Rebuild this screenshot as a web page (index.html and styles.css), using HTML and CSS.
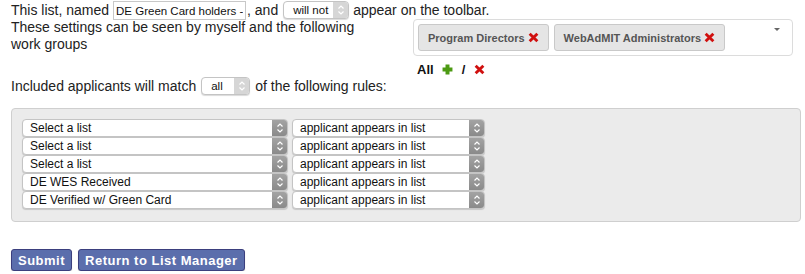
FILE: index.html
```html
<!DOCTYPE html>
<html lang="en">
<head>
    <meta charset="UTF-8" />
    <title>Edit List</title>
    <link rel="stylesheet" href="styles.css">
</head>
<body>
    <form class="list-form" action="#">
        <div class="line name-line">
            <span>This list, named</span>
            <input type="text" class="name-input" value="DE Green Card holders - " />
            <span class="tight">, and</span>
            <span class="select small" style="width:66px"><span class="select-text">will not</span><span class="arrows"><svg viewBox="0 0 8 12" width="8" height="12"><path d="M1.5 4.5 L4 2 L6.5 4.5 M1.5 7.5 L4 10 L6.5 7.5" /></svg></span></span>
            <span>appear on the toolbar.</span>
        </div>

        <div class="settings">
            <p class="settings-text">These settings can be seen by myself and the following work groups</p>
            <div class="groups">
                <div class="chip-box">
                    <span class="chip">Program Directors <svg class="x-icon" viewBox="0 0 10 10" width="11" height="11"><path d="M1.5 1.5 L8.5 8.5 M8.5 1.5 L1.5 8.5" /></svg></span>
                    <span class="chip">WebAdMIT Administrators <svg class="x-icon" viewBox="0 0 10 10" width="11" height="11"><path d="M1.5 1.5 L8.5 8.5 M8.5 1.5 L1.5 8.5" /></svg></span>
                    <span class="caret"></span>
                </div>
                <div class="all-line">
                    <b>All</b>
                    <svg class="plus-icon" viewBox="0 0 10 10" width="11" height="11"><path d="M5 0.5 V9.5 M0.5 5 H9.5" /></svg>
                    <b class="slash">/</b>
                    <svg class="x-icon" viewBox="0 0 10 10" width="11" height="11"><path d="M1.5 1.5 L8.5 8.5 M8.5 1.5 L1.5 8.5" /></svg>
                </div>
            </div>
        </div>

        <div class="line match-line">
            <span>Included applicants will match</span>
            <span class="select small" style="width:49px"><span class="select-text">all</span><span class="arrows"><svg viewBox="0 0 8 12" width="8" height="12"><path d="M1.5 4.5 L4 2 L6.5 4.5 M1.5 7.5 L4 10 L6.5 7.5" /></svg></span></span>
            <span>of the following rules:</span>
        </div>

        <div class="rules" id="rules"></div>

        <div class="actions">
            <button type="submit">Submit</button>
            <button type="button">Return to List Manager</button>
        </div>
    </form>

    <script>
        const rules = ['Select a list', 'Select a list', 'Select a list', 'DE WES Received', 'DE Verified w/ Green Card'];
        const arrows = '<span class="arrows"><svg viewBox="0 0 8 12" width="8" height="12"><path d="M1.5 4.5 L4 2 L6.5 4.5 M1.5 7.5 L4 10 L6.5 7.5" /></svg></span>';
        const box = document.getElementById('rules');
        rules.forEach(name => {
            const row = document.createElement('div');
            row.className = 'rule';
            row.innerHTML =
                '<span class="select list-select"><span class="select-text">' + name + '</span>' + arrows + '</span>' +
                '<span class="select cond-select"><span class="select-text">applicant appears in list</span>' + arrows + '</span>';
            box.appendChild(row);
        });
    </script>
</body>
</html>
```

FILE: styles.css
```css
* {
    box-sizing: border-box;
}
body {
    margin: 0;
    padding: 0 11px;
    font-family: 'Liberation Sans', Arial, Helvetica, sans-serif;
    font-size: 14px;
    color: #222;
    background: #fff;
}
.line {
    display: flex;
    align-items: center;
    gap: 4px;
    height: 20px;
}
.tight {
    margin-left: -3px;
    margin-right: 1px;
}
.name-input {
    width: 133px;
    height: 19px;
    border: 1px solid #c8c8c8;
    font-family: inherit;
    font-size: 11.5px;
    padding: 0 2px;
    color: #111;
    margin-top: 1px;
}
.select {
    display: inline-flex;
    align-items: stretch;
    height: 18px;
    background: #fff;
    border: 1px solid #c4c4c4;
    border-radius: 4px;
    overflow: hidden;
    font-size: 12px;
    color: #111;
    box-shadow: 0 1px 1px rgba(0, 0, 0, 0.15);
}
.select-text {
    flex: 1;
    padding: 0 7px;
    line-height: 16px;
    white-space: nowrap;
    overflow: hidden;
}
.select.small .select-text {
    padding-left: 9px;
    font-size: 11.5px;
}
.arrows {
    width: 15px;
    display: flex;
    align-items: center;
    justify-content: center;
    background: linear-gradient(#a3a3a3, #8a8a8a);
}
.select.small .arrows {
    background: #d6d6d6;
}
.arrows svg path {
    fill: none;
    stroke: #fff;
    stroke-width: 1.2;
}
.settings {
    display: flex;
    align-items: flex-start;
    margin-top: -1px;
}
.settings-text {
    margin: 0;
    width: 360px;
    line-height: 17px;
}
.groups {
    margin-left: auto;
    margin-right: 1px;
    width: 380px;
}
.chip-box {
    position: relative;
    display: flex;
    gap: 5px;
    height: 37px;
    padding: 4px 4px;
    border: 1px solid #dcdcdc;
    border-radius: 4px;
    background: #fff;
}
.chip {
    display: inline-flex;
    align-items: center;
    height: 27px;
    padding: 0 9px 0 9px;
    background: #e5e5e5;
    border: 1px solid #c9c9c9;
    border-radius: 3px;
    font-size: 11px;
    font-weight: bold;
    color: #555;
    gap: 3px;
}
.x-icon path {
    fill: none;
    stroke: #d0100f;
    stroke-width: 2.6;
}
.plus-icon path {
    fill: none;
    stroke: #4c9a13;
    stroke-width: 3.6;
}
.caret {
    position: absolute;
    right: 12px;
    top: 8px;
    border-left: 3px solid transparent;
    border-right: 3px solid transparent;
    border-top: 3px solid #666;
}
.all-line {
    display: flex;
    align-items: center;
    gap: 8px;
    padding: 6px 0 0 4px;
    font-size: 13px;
    color: #111;
}
.slash {
    margin: 0 1px;
}
.match-line {
    margin-top: -1px;
    gap: 5px;
}
.rules {
    margin-top: 12px;
    width: 790px;
    padding: 10px 10px 12px 10px;
    background: #ebebeb;
    border: 1px solid #cfcfcf;
    border-radius: 4px;
}
.rule {
    display: flex;
    gap: 4px;
}
.list-select {
    width: 266px;
}
.cond-select {
    width: 193px;
}
.actions {
    display: flex;
    gap: 6px;
    margin-top: 27px;
}
button {
    height: 22px;
    padding: 0 6px;
    background: #5b6eac;
    border: 1px solid #3b3f7e;
    border-radius: 3px;
    color: #fff;
    font-family: inherit;
    font-size: 13px;
    font-weight: bold;
    letter-spacing: 0.5px;
    box-shadow: 0 1px 1px rgba(0, 0, 0, 0.2);
}
```
